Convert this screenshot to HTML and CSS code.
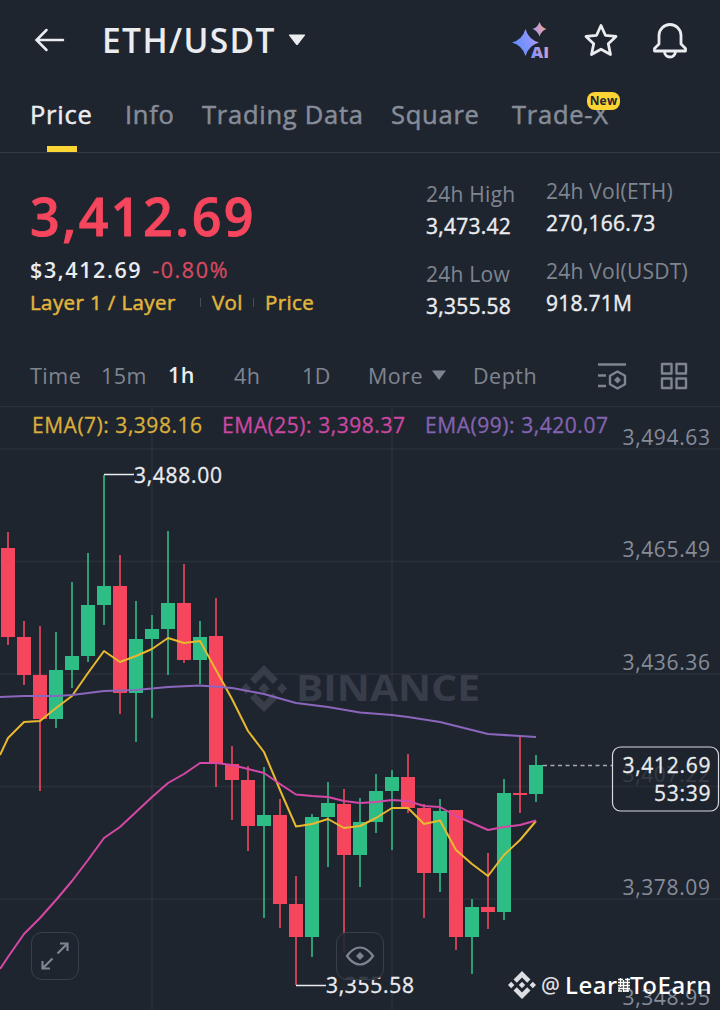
FILE: index.html
```html
<!DOCTYPE html>
<html lang="en">

<head>
    <meta charset="UTF-8">
    <meta name="viewport" content="width=device-width, initial-scale=1.0">
    <title>ETH/USDT</title>
    <link rel="stylesheet" href="styles.css">
</head>

<body>

    <header class="top-bar">
        <svg class="back-icon" width="32" height="26" viewBox="0 0 32 26">
            <path d="M13.500 3L3.500 13l10 10M4 13H30" />
        </svg>
        <h1 class="pair">ETH/USDT</h1>
        <svg class="pair-arrow" width="18" height="12" viewBox="0 0 18 12">
            <path d="M1.500 .5h15q1 0 .4 1L10 10.500q-1 1.200-2 0L1.100 1.500q-.6-1 .4-1z" />
        </svg>
        <div class="actions">
            <svg class="ai-icon" width="40" height="40" viewBox="0 0 40 40">
                <defs>
                    <linearGradient id="aiGradient" gradientUnits="userSpaceOnUse" x1="2" y1="26" x2="38" y2="14">
                        <stop offset="0" stop-color="#5b8df8" />
                        <stop offset=".45" stop-color="#8793ff" />
                        <stop offset=".75" stop-color="#bb9bdd" />
                        <stop offset="1" stop-color="#f0a489" />
                    </linearGradient>
                </defs>
                <path d="M15.500 9q3 10.500 13.500 13.500q-10.500 3-13.500 13.500q-3-10.500-13.500-13.500q10.500-3 13.500-13.500z" />
                <path d="M29.500 2q2 5.500 7 7q-5 1.500-7 7.500q-2-6-7-7.500q5-1.500 7-7z" />
                <text x="21" y="38" class="ai-text" textLength="18" lengthAdjust="spacingAndGlyphs">AI</text>
            </svg>
            <svg class="line-icon" width="36" height="36" viewBox="0 0 36 36">
                <path d="M18 3.500L22.400 13.300L33 14.400L25.300 21.700L27.500 32.500L18 27.200L8.500 32.500L10.700 21.700L3 14.400L13.600 13.300z" />
            </svg>
            <svg class="line-icon" width="36" height="38" viewBox="0 0 36 38">
                <path d="M7 23V14.500a11 11 0 0 1 22 0V23l4.500 4.500v2.500h-31v-2.500zM12.500 30.500a5.500 5.500 0 0 0 11 0" />
            </svg>
        </div>
    </header>

    <nav class="tabs">
        <a class="tab tab-price active">Price</a>
        <a class="tab tab-info">Info</a>
        <a class="tab tab-data">Trading Data</a>
        <a class="tab tab-square">Square</a>
        <a class="tab tab-trade">Trade-X<span class="new-badge">New</span></a>
    </nav>

    <section class="summary">
        <div class="price-box">
            <div class="last-price">3,412.69</div>
            <div class="fiat-row">
                <span class="fiat">$3,412.69</span>
                <span class="change">-0.80%</span>
            </div>
            <div class="tags">
                <span class="tag-layer">Layer 1 / Layer</span>
                <span class="tag-vol">Vol</span>
                <span class="tag-price">Price</span>
            </div>
        </div>
        <div class="stats stats-price">
            <div class="stat">
                <div class="label">24h High</div>
                <div class="value">3,473.42</div>
            </div>
            <div class="stat">
                <div class="label">24h Low</div>
                <div class="value">3,355.58</div>
            </div>
        </div>
        <div class="stats stats-volume">
            <div class="stat">
                <div class="label">24h Vol(ETH)</div>
                <div class="value">270,166.73</div>
            </div>
            <div class="stat">
                <div class="label">24h Vol(USDT)</div>
                <div class="value">918.71M</div>
            </div>
        </div>
    </section>

    <div class="intervals">
        <span class="int-time">Time</span>
        <span class="int-15m">15m</span>
        <span class="int-1h selected">1h</span>
        <span class="int-4h">4h</span>
        <span class="int-1d">1D</span>
        <span class="int-more">More
            <svg width="16" height="11" viewBox="0 0 16 11"><path d="M1 .5h14L8 10z" /></svg>
        </span>
        <span class="int-depth">Depth</span>
        <svg class="tool-icon tool-indicator" width="30" height="28" viewBox="0 0 30 28">
            <path d="M1 2.500h28M1 13.500h8M1 24h8M20.500 9.500l7.500 4.200v8.600l-7.500 4.200l-7.500-4.200v-8.600z" />
            <path class="solid" d="M20.500 14.500l3.500 3.500l-3.500 3.500l-3.500-3.500z" />
        </svg>
        <svg class="tool-icon tool-grid" width="28" height="28" viewBox="0 0 28 28">
            <path d="M2 2h9.500v9.500H2zM16.500 2H26v9.500h-9.500zM2 16.500h9.500V26H2zM16.500 16.500H26V26h-9.500z" />
        </svg>
    </div>

    <main class="chart">
        <svg class="chart-svg" width="720" height="604" viewBox="0 406 720 604">
            <path class="grid" d="M0 406.500H720M0 449H720M0 561.500H720M0 674H720M0 786.500H720M0 899H720M152 408V1010M392 408V1010" />

            <g class="brand">
                <path d="M264 665l14 14l-5 5l-9-9l-9 9l-5-5zM264 712l14-14l-5-5l-9 9l-9-9l-5 5zM264 683l5.500 5.500l-5.500 5.500l-5.500-5.500zM246 683l5 5.500l-5 5.500l-5-5.500zM282 683l5 5.500l-5 5.500l-5-5.500z" />
                <text x="296" y="701" textLength="184" lengthAdjust="spacingAndGlyphs">BINANCE</text>
            </g>

            <g id="candles"></g>

            <polyline class="ema ema7" points="0,755 8,738 24,722 40,721 56,708 72,696 88,673 104,651 120,662 136,656 152,649 168,638 184,643 200,641 216,670 232,699 248,731 264,752 280,790 296,826.500 312,824 328,819 344,828 360,826 376,818 392,808 408,808 424,824 440,820.500 456,850 472,864 488,876 504,855 520,840 536,821" />
            <polyline class="ema ema25" points="0,969 8,957 24,934 40,918 56,900 72,881 88,860 104,838 120,827 136,812 152,797 168,783 184,774 200,763 216,763 232,765 248,769 264,773 280,784 296,794.500 312,796 328,797 344,801 360,803 376,802 392,800 408,801 424,806 440,807 456,816 472,823 488,830 504,827 520,825 536,820.500" />
            <polyline class="ema ema99" points="0,697 24,696 56,696 72,695 104,691 136,690 168,687 200,685.500 232,688 264,694 296,703 328,707 360,712.500 392,715 408,717 440,722 456,726 488,734 520,736 536,737" />

            <g class="legend">
                <text class="legend7" x="32" y="433" textLength="170">EMA(7): 3,398.16</text>
                <text class="legend25" x="222" y="433" textLength="183">EMA(25): 3,398.37</text>
                <text class="legend99" x="425" y="433" textLength="183">EMA(99): 3,420.07</text>
            </g>

            <g class="axis">
                <text x="622.500" y="445" textLength="87.500">3,494.63</text>
                <text x="622.500" y="557" textLength="87.500">3,465.49</text>
                <text x="622.500" y="670" textLength="87.500">3,436.36</text>
                <text class="covered" x="622.500" y="782" textLength="87.500">3,407.22</text>
                <text x="622.500" y="895" textLength="87.500">3,378.09</text>
                <text x="622.500" y="1005" textLength="87.500">3,348.95</text>
            </g>

            <path class="marker" d="M104 474.500H134M296 985.500H326" />
            <text class="marker-text" x="134" y="483" textLength="88">3,488.00</text>
            <text class="marker-text" x="326" y="993" textLength="88">3,355.58</text>

            <path class="last-line" d="M543 765.500H612" />
            <rect class="last-box" x="612.500" y="747" width="106" height="64" rx="8" />
            <text class="last-text" x="622.500" y="773" textLength="88">3,412.69</text>
            <text class="last-text" x="654" y="801" textLength="56.500">53:39</text>
        </svg>

        <button class="chart-button expand-button">
            <svg width="32" height="32" viewBox="0 0 32 32">
                <path d="M18.500 13.500L28 4M21 3.500h7.500V11M13.500 18.500L4 28M3.500 21v7.500H11" />
            </svg>
        </button>
        <button class="chart-button eye-button">
            <svg width="32" height="24" viewBox="0 0 32 24">
                <path d="M3 12q6-8.500 13-8.500T29 12q-6 8.500-13 8.500T3 12z" />
                <path class="solid" d="M16 8l4 4l-4 4l-4-4z" />
            </svg>
        </button>

        <div class="author">
            <svg width="28" height="28" viewBox="0 0 28 28">
                <path d="M14 0l8.500 8.500l-3.300 3.300L14 6.600l-5.200 5.200l-3.300-3.300zM14 28l8.500-8.500l-3.300-3.300L14 21.400l-5.200-5.200l-3.300 3.300zM14 10.800l3.200 3.200l-3.200 3.200l-3.200-3.200zM3.200 10.800l3.200 3.200l-3.200 3.200L0 14zM24.800 10.800L28 14l-3.200 3.200l-3.200-3.200z" />
            </svg>
            <span class="at">@</span>
            <span class="author-name">Lear</span>
            <svg class="glyph" width="12" height="14" viewBox="0 0 12 14">
                <path d="M0 1.500h5M7 1.500h5M0 4.500h12M0 7.500h5M6 7.500h6M1 10.500h11M0 13h4M6 13h5M2.500 0v9M5.500 2v12M9.500 0v14M1 9v4" />
            </svg>
            <span class="author-name">ToEarn</span>
        </div>
    </main>

    <script>
        // [wick top, body top, body bottom, wick bottom, rising]
        var candles = [
            [532, 548, 637, 645, 0], [621, 637, 675, 685, 0], [626, 675, 719, 791, 0], [632, 670, 719, 728, 1],
            [582, 656, 670, 688, 1], [553, 605, 656, 662, 1], [475, 586, 605, 625, 1], [555, 586, 693, 714, 0],
            [601, 639, 693, 742, 1], [615, 629, 639, 718, 1], [531, 603, 629, 675, 1], [564, 603, 660, 663, 0],
            [621, 637, 660, 684, 1], [598, 636, 764, 787, 0], [746, 764, 780, 820, 0], [766, 780, 826, 851, 0],
            [767, 815, 826, 918, 1], [799, 815, 904, 928, 0], [876, 904, 937, 985, 0], [814, 817, 937, 957, 1],
            [782, 803, 817, 867, 1], [789, 804, 855, 953, 0], [798, 822, 855, 887, 1], [774, 791, 822, 833, 1],
            [770, 777, 791, 850, 1], [754, 777, 808, 813, 0], [804, 808, 873, 918, 0], [799, 811, 873, 892, 1],
            [810, 810, 937, 950, 0], [899, 907, 937, 974, 1], [853, 907, 912, 929, 0], [779, 793, 912, 920, 1],
            [736, 793, 795, 813, 0], [755, 765, 794, 802, 1]
        ];

        function addRect(group, x, y, width, height, name) {
            var rect = document.createElementNS('http://www.w3.org/2000/svg', 'rect');
            rect.setAttribute('x', x);
            rect.setAttribute('y', y);
            rect.setAttribute('width', width);
            rect.setAttribute('height', height);
            rect.setAttribute('class', name);
            group.appendChild(rect);
        }

        var group = document.getElementById('candles');
        candles.forEach(function (c, i) {
            var x = 8 + i * 16;
            var name = c[4] ? 'up' : 'down';
            addRect(group, x - 1, c[0], 2, c[3] - c[0], name + ' wick');
            addRect(group, x - 7, c[1], 14, c[2] - c[1], name);
        });
    </script>

</body>

</html>
```
FILE: styles.css
```css
* {
    box-sizing: border-box;
}

body {
    margin: 0;
    width: 720px;
    height: 1010px;
    overflow: hidden;
    background-color: #1f252f;
    color: #eaecef;
    font-family: 'Open Sans', 'Noto Sans', sans-serif;
}

svg {
    display: block;
    flex: none;
}

.top-bar {
    display: flex;
    align-items: center;
    height: 80px;
    padding: 0 32px 0 33px;
}

.back-icon {
    fill: none;
    stroke: #eaecef;
    stroke-width: 2.5;
    stroke-linecap: round;
}

.pair {
    width: 173px;
    margin: 0 12px 0 37px;
    font-size: 33.5px;
    font-weight: 600;
    letter-spacing: 1.4px;
    line-height: 40px;
    white-space: nowrap;
}

.pair-arrow {
    margin-left: 1px;
    fill: #eaecef;
}

.actions {
    display: flex;
    align-items: center;
    gap: 33px;
    margin-left: auto;
}

.ai-icon {
    fill: url(#aiGradient);
}

.ai-text {
    font-size: 15.5px;
    font-weight: 800;
}

.line-icon {
    fill: none;
    stroke: #eaecef;
    stroke-width: 2.8;
    stroke-linejoin: round;
}

.tabs {
    display: flex;
    height: 73px;
    padding-left: 30px;
    border-bottom: 1px solid #353b46;
    font-size: 25.5px;
    letter-spacing: .75px;
    line-height: 69px;
    color: #868c98;
    white-space: nowrap;
    -webkit-text-stroke: .5px currentColor;
}

.tab {
    position: relative;
}

.tab-price {
    width: 95px;
}

.tab-info {
    width: 77px;
}

.tab-data {
    width: 189px;
}

.tab-square {
    width: 121px;
}

.active {
    color: #eaecef;
}

.active::after {
    content: '';
    position: absolute;
    left: 17px;
    bottom: 0;
    width: 30px;
    height: 6px;
    background-color: #fcd535;
}

.new-badge {
    position: absolute;
    top: 12px;
    left: 75px;
    width: 33px;
    height: 18px;
    border-radius: 8px;
    background-color: #fcd535;
    color: #202630;
    font-size: 12px;
    font-weight: 700;
    letter-spacing: .2px;
    line-height: 18px;
    text-align: center;
    -webkit-text-stroke: 0;
}

.summary {
    display: flex;
    height: 193px;
    padding-left: 30px;
    white-space: nowrap;
}

.price-box {
    width: 396px;
    padding-top: 30px;
}

.last-price {
    color: #f6465d;
    font-size: 52px;
    font-weight: 600;
    letter-spacing: 2.4px;
    line-height: 66px;
    -webkit-text-stroke: .8px currentColor;
}

.fiat-row {
    display: flex;
    gap: 10px;
    margin-top: 5px;
    font-size: 21.5px;
    letter-spacing: 1.6px;
    line-height: 32px;
}

.fiat {
    font-weight: 600;
}

.change {
    color: #d74a60;
    -webkit-text-stroke: .3px currentColor;
}

.tags {
    display: flex;
    align-items: center;
    color: #e0b53c;
    font-size: 20.5px;
    letter-spacing: .4px;
    line-height: 32px;
    -webkit-text-stroke: .5px currentColor;
}

.tag-layer {
    width: 170px;
}

.tag-vol,
.tag-price {
    display: flex;
    align-items: center;
}

.tag-vol::before,
.tag-price::before {
    content: '';
    width: 1px;
    height: 9px;
    margin-right: 11px;
    background-color: #474d57;
}

.tag-price::before {
    margin-left: 10px;
}

.stats {
    display: flex;
    flex-direction: column;
    gap: 16px;
    padding-top: 25px;
    font-size: 21px;
    letter-spacing: .25px;
    line-height: 32px;
}

.stats-price {
    width: 120px;
}

.stats-volume {
    padding-top: 22px;
}

.label {
    color: #7f8590;
}

.value {
    -webkit-text-stroke: .4px currentColor;
}

.intervals {
    display: flex;
    align-items: center;
    height: 60px;
    padding-left: 30px;
    font-size: 21.5px;
    letter-spacing: .5px;
    color: #7f8590;
    white-space: nowrap;
}

.intervals span {
    padding-bottom: 1px;
}

.int-time {
    width: 71px;
}

.int-15m {
    width: 67px;
}

.int-1h {
    width: 66px;
}

.int-4h {
    width: 68px;
}

.int-1d {
    width: 66px;
}

.int-more {
    display: flex;
    align-items: center;
    gap: 8px;
    width: 105px;
}

.int-more svg {
    fill: #7f8590;
}

.int-depth {
    width: 124px;
}

.intervals .selected {
    padding-bottom: 3px;
    color: #eaecef;
    font-weight: 600;
}

.tool-icon {
    fill: none;
    stroke: #7f8590;
    stroke-width: 2.4;
    stroke-linejoin: round;
}

.solid {
    fill: #7f8590;
    stroke: none;
}

.tool-grid {
    margin-left: 33px;
}

.chart {
    position: relative;
    height: 604px;
}

.chart-svg {
    font-size: 21px;
}

.grid {
    fill: none;
    stroke: #2b313b;
    stroke-width: 1.5;
}

.brand {
    fill: #383e49;
    font-size: 35px;
    font-weight: 700;
}

.up {
    fill: #2ebd85;
}

.down {
    fill: #f6465d;
}

.wick {
    opacity: .8;
}

.ema {
    fill: none;
    stroke-width: 2;
    stroke-linejoin: round;
}

.ema7 {
    stroke: #e8b92f;
}

.ema25 {
    stroke: #d548a6;
}

.ema99 {
    stroke: #8b66bd;
}

.legend text {
    stroke-width: .3;
}

.legend7 {
    fill: #d9ae3a;
    stroke: #d9ae3a;
}

.legend25 {
    fill: #cb48a2;
    stroke: #cb48a2;
}

.legend99 {
    fill: #8463b0;
    stroke: #8463b0;
}

.axis {
    fill: #868c98;
}

.axis .covered {
    opacity: .3;
}

.marker {
    stroke: #eaecef;
    stroke-width: 1.3;
}

.marker-text,
.last-text {
    fill: #eaecef;
    stroke: #eaecef;
    stroke-width: .3;
}

.last-line {
    stroke: #a5aab3;
    stroke-width: 1.3;
    stroke-dasharray: 4 3.5;
}

.last-box {
    fill: rgba(31, 37, 47, .3);
    stroke: #d5d8de;
    stroke-width: 1.2;
}

.chart-button {
    position: absolute;
    top: 526px;
    display: flex;
    align-items: center;
    justify-content: center;
    width: 48px;
    height: 48px;
    padding: 0;
    border: 1.5px solid #3a404b;
    border-radius: 11px;
    background-color: rgba(31, 37, 47, .88);
}

.chart-button svg {
    fill: none;
    stroke: #7f8590;
    stroke-width: 2.2;
}

.chart-button .solid {
    fill: #7f8590;
    stroke: none;
}

.expand-button {
    left: 31px;
}

.eye-button {
    left: 336px;
}

.author {
    position: absolute;
    left: 508px;
    top: 561px;
    display: flex;
    align-items: center;
    height: 36px;
    color: #fff;
    font-family: 'Noto Sans', sans-serif;
    font-size: 24px;
    font-weight: 500;
    letter-spacing: .6px;
    line-height: 36px;
    white-space: nowrap;
}

.author svg {
    fill: #dcdee2;
}

.at {
    width: 24px;
    margin-left: 5px;
    color: #dcdee2;
    font-size: 21px;
}

.author .glyph {
    fill: none;
    stroke: #fff;
    stroke-width: 1.3;
}
```
